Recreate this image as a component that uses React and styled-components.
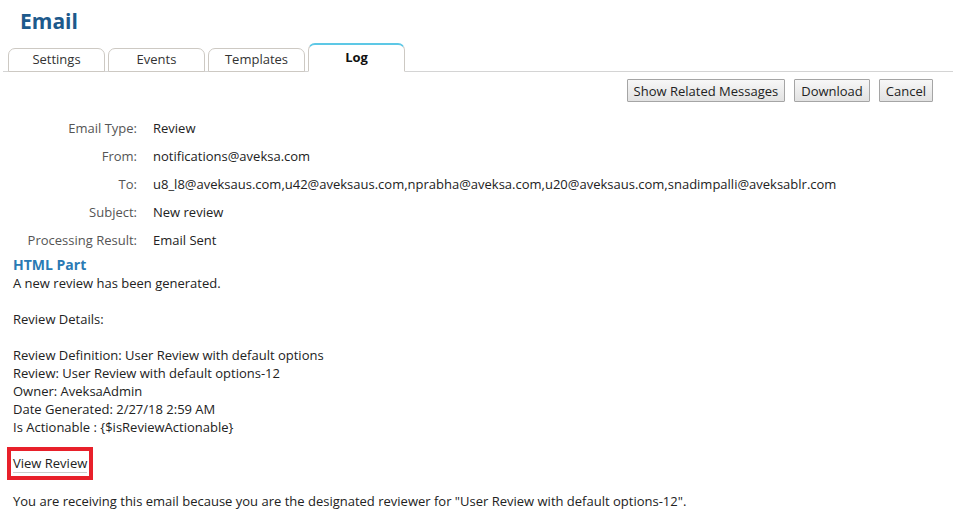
import React from "react"
import styled, { createGlobalStyle } from "styled-components"

const GlobalStyle = createGlobalStyle`
  body {
    margin: 0;
    background: #fff;
    font-family: "Open Sans", "Liberation Sans", sans-serif;
    font-size: 13px;
    color: #222;
  }
`

const Page = styled.div`
  width: 953px;
  height: 527px;
  overflow: hidden;
`

const Title = styled.h1`
  margin: 0;
  padding: 8px 0 0 20px;
  height: 35px;
  box-sizing: border-box;
  font-size: 21px;
  line-height: 26px;
  font-weight: 700;
  color: #1d5a8c;
`

const TabBar = styled.div`
  display: flex;
  align-items: flex-end;
  gap: 3px;
  height: 36px;
  margin-left: 3px;
  padding-left: 5px;
  border-bottom: 1px solid #d4d4d4;
`

const Tab = styled.div`
  width: 97px;
  box-sizing: border-box;
  height: ${p => (p.active ? "29px" : "24px")};
  margin-bottom: -1px;
  display: flex;
  justify-content: center;
  align-items: ${p => (p.active ? "flex-start" : "center")};
  padding-top: ${p => (p.active ? "3px" : "0")};
  padding-bottom: ${p => (p.active ? "0" : "2px")};
  border: 1px solid #cdc9c3;
  border-bottom: ${p => (p.active ? "1px solid #fff" : "1px solid #cdc9c3")};
  border-top: ${p => (p.active ? "2px solid #5dc8e6" : "1px solid #cdc9c3")};
  border-radius: 7px 7px 0 0;
  background: #fff;
  font-size: 13px;
  font-weight: ${p => (p.active ? 700 : 400)};
  color: ${p => (p.active ? "#111" : "#333")};
`

const Actions = styled.div`
  display: flex;
  justify-content: flex-end;
  gap: 9px;
  padding: 7px 20px 0 0;
`

const Button = styled.button`
  height: 23px;
  padding: 0 6px;
  font-family: "Open Sans", "Liberation Sans", sans-serif;
  font-size: 13px;
  color: #222;
  background: linear-gradient(#f7f7f7, #e2e2e2);
  border: 1px solid #a5a5a5;
  border-radius: 1px;
`

const Fields = styled.div`
  display: grid;
  grid-template-columns: 137px auto;
  column-gap: 16px;
  row-gap: 10px;
  padding-top: 17px;
  line-height: 18px;
`

const Label = styled.div`
  text-align: right;
  color: #555;
`

const Value = styled.div`
  color: #222;
  white-space: nowrap;
`

const Section = styled.h2`
  margin: 7px 0 0 13px;
  font-size: 14px;
  line-height: 18px;
  font-weight: 700;
  color: #2a7ab4;
`

const Body = styled.div`
  padding-left: 13px;
  line-height: 18px;
  color: #222;
`

const Line = styled.div`
  margin-top: ${p => p.gap || 0}px;
`

const Highlight = styled.div`
  display: inline-block;
  margin: 11px 0 0 -6px;
  padding: 3px 2px 3px 2px;
  border: 4px solid #e8202a;
`

const Link = styled.a`
  color: #222;
  text-decoration: none;
  border-bottom: 1px solid #ccc;
  line-height: 17px;
  display: inline-block;
`

const fields = [
  ["Email Type:", "Review"],
  ["From:", "notifications@aveksa.com"],
  ["To:", "u8_l8@aveksaus.com,u42@aveksaus.com,nprabha@aveksa.com,u20@aveksaus.com,snadimpalli@aveksablr.com"],
  ["Subject:", "New review"],
  ["Processing Result:", "Email Sent"],
]

const App = () => (
  <Page>
    <GlobalStyle />
    <Title>Email</Title>
    <TabBar>
      <Tab>Settings</Tab>
      <Tab>Events</Tab>
      <Tab>Templates</Tab>
      <Tab active>Log</Tab>
    </TabBar>
    <Actions>
      <Button>Show Related Messages</Button>
      <Button>Download</Button>
      <Button>Cancel</Button>
    </Actions>
    <Fields>
      {fields.map(([l, v]) => (
        <React.Fragment key={l}>
          <Label>{l}</Label>
          <Value>{v}</Value>
        </React.Fragment>
      ))}
    </Fields>
    <Section>HTML Part</Section>
    <Body>
      <Line>A new review has been generated.</Line>
      <Line gap={18}>Review Details:</Line>
      <Line gap={18}>Review Definition: User Review with default options</Line>
      <Line>Review: User Review with default options-12</Line>
      <Line>Owner: AveksaAdmin</Line>
      <Line>Date Generated: 2/27/18 2:59 AM</Line>
      <Line>Is Actionable : {"{$isReviewActionable}"}</Line>
      <Highlight>
        <Link href="#">View Review</Link>
      </Highlight>
      <Line gap={12}>You are receiving this email because you are the designated reviewer for "User Review with default options-12".</Line>
    </Body>
  </Page>
)

export default App
